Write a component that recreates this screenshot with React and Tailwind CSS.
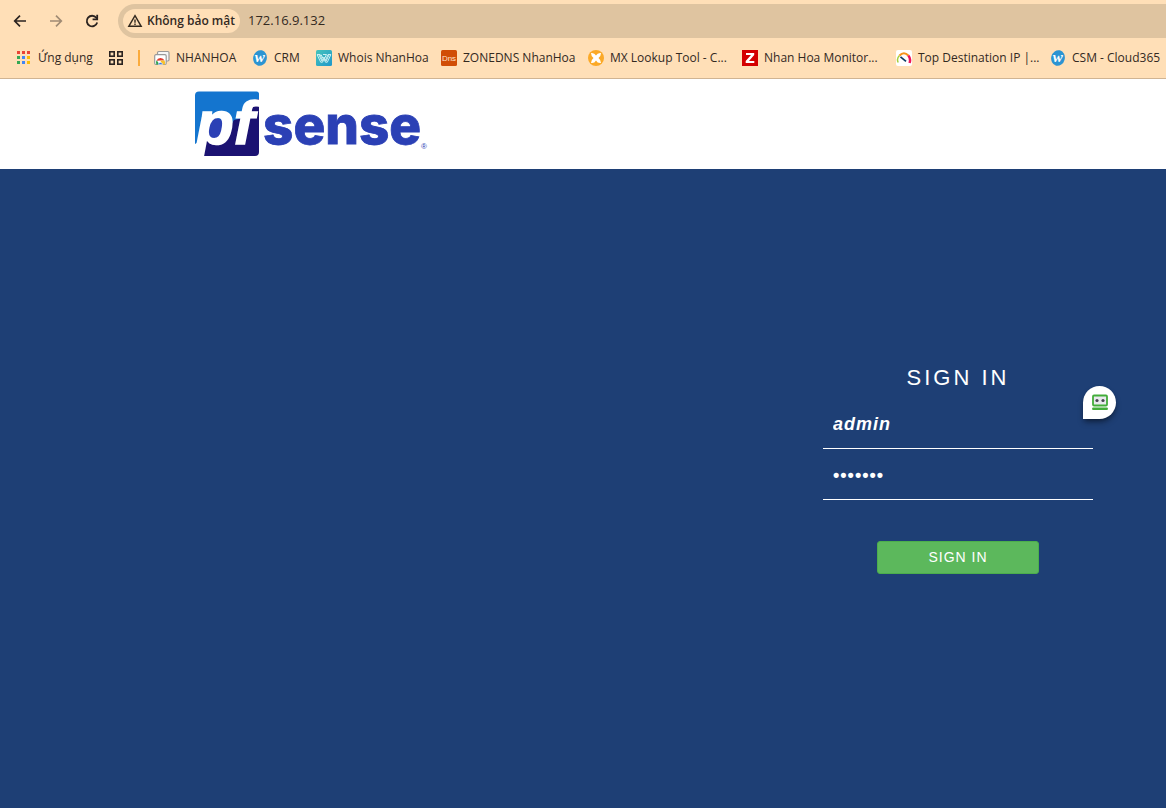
import React from "react";

function AppsIcon() {
  const colors = ["#ea4335", "#ea4335", "#ea4335", "#34a853", "#4285f4", "#fbbc04", "#34a853", "#4285f4", "#fbbc04"];
  return (
    <svg width="16" height="16" viewBox="0 0 16 16" aria-hidden="true">
      {colors.map((c, i) => (
        <rect key={i} x={2 + (i % 3) * 5} y={1 + Math.floor(i / 3) * 5} width="3" height="3" fill={c} />
      ))}
    </svg>
  );
}

function BackIcon() {
  return (
    <svg width="16" height="16" viewBox="0 0 16 16" fill="none" stroke="currentColor" strokeWidth="1.700" aria-hidden="true">
      <path d="M14 8H3.200M8 2.700L2.700 8 8 13.300" />
    </svg>
  );
}

function ForwardIcon() {
  return (
    <svg width="16" height="16" viewBox="0 0 16 16" fill="none" stroke="currentColor" strokeWidth="1.700" aria-hidden="true">
      <path d="M2 8h10.800M8 2.700L13.300 8 8 13.300" />
    </svg>
  );
}

function ReloadIcon() {
  return (
    <svg width="16" height="16" viewBox="0 0 16 16" fill="none" stroke="currentColor" strokeWidth="1.800" aria-hidden="true">
      <path d="M13.200 9.500A5.300 5.300 0 1 1 12.300 4.800L13 5.800" />
      <path d="M13.200 1.800v4.600H8.600" />
    </svg>
  );
}

function GridIcon() {
  return (
    <svg width="16" height="16" viewBox="0 0 16 16" fill="none" stroke="#2b2320" strokeWidth="1.6" aria-hidden="true">
      <rect x="1.8" y="1.8" width="4.4" height="4.4" />
      <rect x="9.8" y="1.8" width="4.4" height="4.4" />
      <rect x="1.8" y="9.8" width="4.4" height="4.4" />
      <rect x="9.8" y="9.8" width="4.4" height="4.4" />
    </svg>
  );
}

function StackIcon() {
  return (
    <svg width="16" height="16" viewBox="0 0 16 16" aria-hidden="true">
      <rect x="3.5" y="1.500" width="11.500" height="9.500" rx="1.200" fill="#f6f6f6" stroke="#999" strokeWidth="1.200" />
      <rect x=".7" y="4.700" width="11.500" height="9.800" rx="1.200" fill="#fff" stroke="#999" strokeWidth="1.200" />
      <path d="M2.500 10.800A4.300 4.300 0 0 1 10.500 10.500H6.500z" fill="#e33b2e" />
      <path d="M2.300 14.500A4.300 4.300 0 0 1 2.700 10.300L5.500 14.500z" fill="#32a350" />
      <path d="M10.500 10.500A4.300 4.300 0 0 1 10.800 14.500H7.500L6.500 10.500z" fill="#f8c12c" />
      <path d="M4.400 14.500A2.100 2.100 0 1 1 8.600 14.500z" fill="#3b78e7" stroke="#fff" strokeWidth=".5" />
    </svg>
  );
}

function WIcon() {
  return (
    <svg width="16" height="16" viewBox="0 0 16 16" aria-hidden="true">
      <ellipse cx="8" cy="8" rx="6.800" ry="7.900" transform="rotate(14 8 8)" fill="#2c94d2" />
      <text x="7.800" y="11.500" textAnchor="middle" fontFamily="Liberation Serif, serif" fontStyle="italic" fontWeight="700" fontSize="15" fill="#fff">w</text>
    </svg>
  );
}

function WhoisIcon() {
  return (
    <svg width="16" height="16" viewBox="0 0 16 16" fill="none" stroke="#d9f6f6" strokeWidth=".9" aria-hidden="true">
      <defs>
        <linearGradient id="whois" x1="0" y1="0" x2="1" y2="1">
          <stop offset="0" stopColor="#46c4bb" />
          <stop offset="1" stopColor="#1f97cb" />
        </linearGradient>
      </defs>
      <rect width="16" height="16" rx="1.5" fill="url(#whois)" stroke="none" />
      <path d="M1 4.5h3l2.5 6 1.5-3.5 1.5 3.5 2.5-6h3M1.2 4.8l3.5 7.4h1.8L8 9l1.5 3.2h1.8l3.5-7.4M5 4.5l2 4M7 4.5h3.5l-2 4M3 5l3 6.3M13 5l-3 6.3" />
    </svg>
  );
}

function DnsIcon() {
  return (
    <svg width="16" height="16" viewBox="0 0 16 16" aria-hidden="true">
      <rect width="16" height="16" rx="1.5" fill="#d14d06" />
      <text x="8" y="11" textAnchor="middle" fontFamily="Liberation Sans Narrow, Liberation Sans, sans-serif" fontSize="8" fill="#ffe3cc">Dns</text>
    </svg>
  );
}

function MxIcon() {
  return (
    <svg width="16" height="16" viewBox="0 0 16 16" aria-hidden="true">
      <circle cx="8" cy="8" r="8" fill="#fba927" />
      <path d="M3 3Q6.500 2.500 8 5.500 9.500 2.500 13 3 13 6 10.500 8 13 10 13 13 9.500 13.500 8 10.500 6.500 13.500 3 13 3 10 5.500 8 3 6 3 3z" fill="#fff" />
    </svg>
  );
}

function ZIcon() {
  return (
    <svg width="16" height="16" viewBox="0 0 16 16" aria-hidden="true">
      <rect width="16" height="16" fill="#d40000" />
      <path d="M4 3h8.200v2L7 11h5.300v2H3.700v-2L9 5H4z" fill="#fff" />
    </svg>
  );
}

function GaugeIcon() {
  return (
    <svg width="16" height="16" viewBox="0 0 16 16" fill="none" aria-hidden="true">
      <rect width="16" height="16" rx="2" fill="#fff" />
      <path d="M2.200 12.500A6 6 0 0 1 3.500 5.500" stroke="#a5cf3b" strokeWidth="1.500" />
      <path d="M3.500 5.500Q8 1 12.300 5.500" stroke="#f7941e" strokeWidth="2.200" />
      <path d="M12.300 5.500Q15 8.500 13.600 13" stroke="#ee145b" strokeWidth="2.500" />
      <path d="M4.500 6.800l5.500 4.500" stroke="#0d3b66" strokeWidth="1.700" />
    </svg>
  );
}

function WarningIcon() {
  return (
    <svg width="16" height="16" viewBox="0 0 16 16" fill="none" stroke="#33291f" strokeWidth="1.400" aria-hidden="true">
      <path d="M8 2.700L14.200 13.300H1.800z" />
      <path d="M8 6.500v3.200M8 10.600v1.400" />
    </svg>
  );
}

function Logo() {
  return (
    <svg width="240" height="90" viewBox="0 -11 240 90" role="img" aria-label="pfSense">
      <path d="M5 1.500H62.500Q65 1.500 65 4V30L44 48 1 60V5.500Q1 1.500 5 1.500z" fill="#1475cf" />
      <path d="M65 9V62Q65 66 61 66H7.500L12 50H28L40 30 49 28 54 12z" fill="#1b1272" />
      <ellipse cx="21" cy="39" rx="11" ry="11" fill="#2b40b5" />
      <path d="M1 54V66H7.500L12 48z" fill="#fff" />
      <text x="2" y="54" fontFamily="Liberation Sans, sans-serif" fontStyle="italic" fontWeight="700" fontSize="62" fill="#fff" stroke="#fff" strokeWidth="1.500">pf</text>
      <text x="69" y="54" fontFamily="Inter, sans-serif" fontWeight="800" fontSize="53" fill="#2b40b5" stroke="#2b40b5" strokeWidth=".8">sense</text>
      <text x="227" y="59" fontFamily="Liberation Sans, sans-serif" fontSize="8" fill="#2b40b5">®</text>
    </svg>
  );
}

const bookmarks = [
  { label: "NHANHOA", Icon: StackIcon, width: "w-[98px]" },
  { label: "CRM", Icon: WIcon, width: "w-[64px]" },
  { label: "Whois NhanHoa", Icon: WhoisIcon, width: "w-[125px]" },
  { label: "ZONEDNS NhanHoa", Icon: DnsIcon, width: "w-[147px]" },
  { label: "MX Lookup Tool - C...", Icon: MxIcon, width: "w-[154px]" },
  { label: "Nhan Hoa Monitor...", Icon: ZIcon, width: "w-[154px]" },
  { label: "Top Destination IP |...", Icon: GaugeIcon, width: "w-[154px]" },
  { label: "CSM - Cloud365", Icon: WIcon, width: "w-[120px]" },
];

export default function App() {
  return (
    <div className="flex min-h-screen flex-col overflow-x-hidden bg-[#1e3f75]">
      <header className="border-b border-[#d0b493] bg-[#ffdfb7] pt-1 font-['Open_Sans',sans-serif] text-[12px] text-[#33291f]">
        <div className="flex h-[34px] items-center">
          <div className="flex w-[118px] shrink-0 items-center gap-4 pl-[10px]">
            <button type="button" aria-label="Back" className="flex size-5 items-center justify-center text-[#2b2320]"><BackIcon /></button>
            <button type="button" aria-label="Forward" className="flex size-5 items-center justify-center text-[#a08b74]"><ForwardIcon /></button>
            <button type="button" aria-label="Reload" className="flex size-5 items-center justify-center text-[#2b2320]"><ReloadIcon /></button>
          </div>
          <div className="flex h-[34px] min-w-0 flex-1 items-center gap-2 rounded-l-full bg-[#dfc4a0] pl-[5px]">
            <button type="button" className="flex h-6 w-[117px] shrink-0 items-center gap-1 rounded-full bg-[#ffdfb7] pl-1 font-semibold whitespace-nowrap">
              <WarningIcon />
              Không bảo mật
            </button>
            <input aria-label="Address" defaultValue="172.16.9.132" className="min-w-0 flex-1 bg-transparent text-[13px] outline-none" />
          </div>
        </div>
        <nav className="flex h-10 items-center overflow-hidden pl-[15px] whitespace-nowrap">
          <a href="#apps" className="flex w-[93px] shrink-0 items-center gap-[7px]"><AppsIcon />Ứng dụng</a>
          <a href="#grid" aria-label="Tab groups" className="shrink-0"><GridIcon /></a>
          <span className="mx-[14px] h-4 w-[2px] shrink-0 bg-[#fbab3c]" />
          {bookmarks.map(({ label, Icon, width }) => (
            <a key={label} href="#bookmark" className={`flex shrink-0 items-center gap-[6px] ${width}`}>
              <span className="shrink-0"><Icon /></span>
              {label}
            </a>
          ))}
        </nav>
      </header>
      <div className="flex h-[90px] items-center bg-white pl-[194px]">
        <Logo />
      </div>
      <main className="flex flex-1 justify-end pt-[196px] pr-[73px] font-['Liberation_Sans',sans-serif] text-white">
        <form className="relative flex w-[270px] flex-col items-center" onSubmit={(e) => e.preventDefault()}>
          <h1 className="text-[22px] leading-[26px] tracking-[3px]">SIGN IN</h1>
          <input aria-label="Username" defaultValue="admin" className="mt-2 h-[50px] w-full border-b border-white bg-transparent px-[10px] pt-[2px] text-[18px] font-bold tracking-[1px] italic outline-none" />
          <input aria-label="Password" type="password" defaultValue="pfsense" className="mt-px h-[50px] w-full border-b border-white bg-transparent px-[10px] pt-[2px] text-[18px] font-bold tracking-[1px] outline-none" />
          <button type="submit" className="mt-[41px] h-[33px] w-[162px] rounded-[3px] border border-[#4cae4c] bg-[#5cb85c] text-[14px] tracking-[1px]">SIGN IN</button>
          <button type="button" aria-label="Fill password" className="absolute top-[21px] -right-[23px] flex size-[33px] items-center justify-center rounded-full rounded-bl-none bg-white shadow-md shadow-black/40">
            <svg width="18" height="18" viewBox="0 0 18 18" aria-hidden="true">
              <rect x="2" y="1.500" width="14" height="10" rx="1" fill="#e9e9ee" stroke="#43ad3a" strokeWidth="1.800" />
              <circle cx="6" cy="6.500" r="1.600" fill="#454550" />
              <circle cx="12" cy="6.500" r="1.600" fill="#454550" />
              <rect x="1" y="13.500" width="16" height="2.500" rx="1.200" fill="#43ad3a" />
            </svg>
          </button>
        </form>
      </main>
    </div>
  );
}
